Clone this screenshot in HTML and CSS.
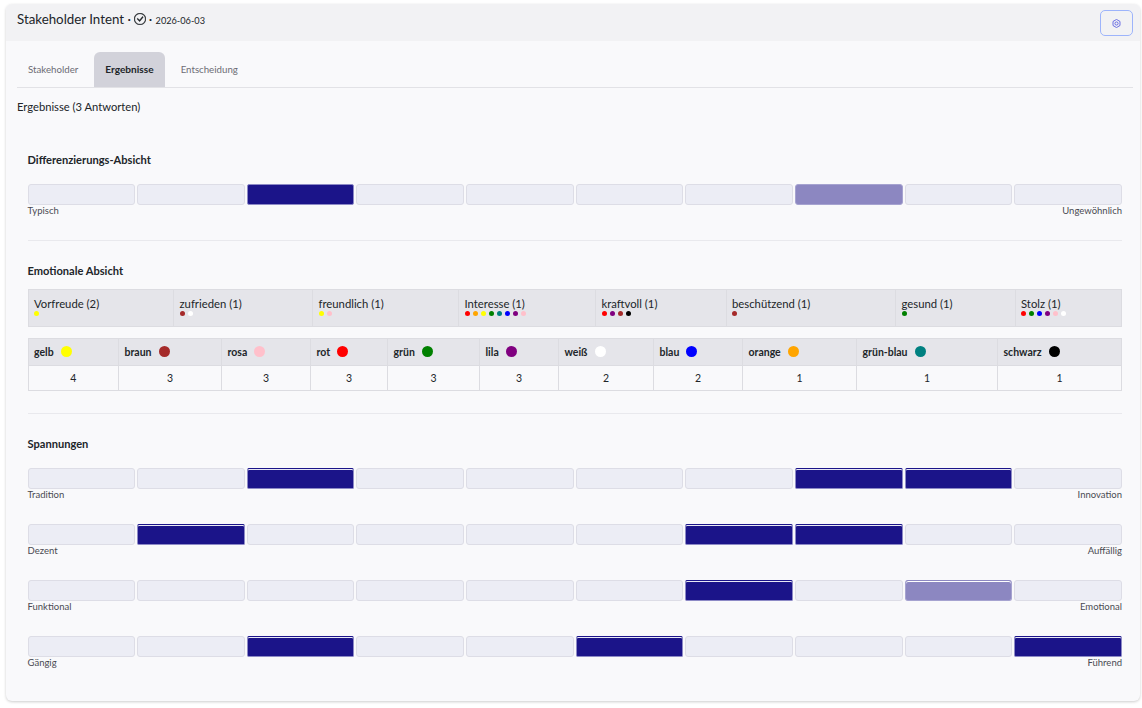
FILE: index.html
```html
<!DOCTYPE html>
<html lang="de">
<head>
    <meta charset="UTF-8">
    <meta name="viewport" content="width=device-width, initial-scale=1.0">
    <title>Stakeholder Intent</title>
    <link rel="stylesheet" href="styles.css">
</head>
<body>
    <div class="card">
        <div class="card-header">
            <div class="title">
                Stakeholder Intent ·
                <svg class="check-icon" viewBox="0 0 16 16" fill="currentColor" stroke="currentColor" stroke-width="0.5">
                    <path d="M8 15A7 7 0 1 1 8 1a7 7 0 0 1 0 14m0 1A8 8 0 1 0 8 0a8 8 0 0 0 0 16"/>
                    <path d="m10.97 4.97-.02.022-3.473 4.425-2.093-2.094a.75.75 0 0 0-1.06 1.06L6.97 11.03a.75.75 0 0 0 1.079-.02l3.992-4.99a.75.75 0 0 0-1.071-1.05"/>
                </svg>
                · <small>2026-06-03</small>
            </div>
            <button class="nut-button">
                <svg viewBox="0 0 16 16" fill="none" stroke="currentColor" stroke-width="1.6">
                    <path d="M8 .8 14.2 4.4V11.6L8 15.2 1.8 11.6V4.4Z"/>
                    <circle cx="8" cy="8" r="2.8"/>
                </svg>
            </button>
        </div>

        <div class="card-body">
            <div class="tabs">
                <a class="tab">Stakeholder</a>
                <a class="tab active">Ergebnisse</a>
                <a class="tab">Entscheidung</a>
            </div>

            <p class="result-count">Ergebnisse (3 Antworten)</p>

            <div class="section first">
                <h3>Differenzierungs-Absicht</h3>
                <div class="scale">
                    <div class="bars">
                        <div class="bar"></div><div class="bar"></div><div class="bar solid"></div><div class="bar"></div><div class="bar"></div>
                        <div class="bar"></div><div class="bar"></div><div class="bar half"></div><div class="bar"></div><div class="bar"></div>
                    </div>
                    <div class="scale-labels"><span>Typisch</span><span>Ungewöhnlich</span></div>
                </div>
            </div>

            <div class="section">
                <h3 class="tight">Emotionale Absicht</h3>
                <table class="emotions">
                    <tr>
                        <td>Vorfreude (2)<div class="dots"><i class="yellow"></i></div></td>
                        <td>zufrieden (1)<div class="dots"><i class="brown"></i><i class="white"></i></div></td>
                        <td>freundlich (1)<div class="dots"><i class="yellow"></i><i class="pink"></i></div></td>
                        <td>Interesse (1)<div class="dots"><i class="red"></i><i class="orange"></i><i class="yellow"></i><i class="green"></i><i class="teal"></i><i class="blue"></i><i class="purple"></i><i class="pink"></i></div></td>
                        <td>kraftvoll (1)<div class="dots"><i class="red"></i><i class="purple"></i><i class="brown"></i><i class="black"></i></div></td>
                        <td>beschützend (1)<div class="dots"><i class="brown"></i></div></td>
                        <td>gesund (1)<div class="dots"><i class="green"></i></div></td>
                        <td>Stolz (1)<div class="dots"><i class="red"></i><i class="green"></i><i class="blue"></i><i class="purple"></i><i class="pink"></i><i class="white"></i></div></td>
                    </tr>
                </table>

                <table class="colors">
                    <tr>
                        <th>gelb <i class="yellow"></i></th>
                        <th>braun <i class="brown"></i></th>
                        <th>rosa <i class="pink"></i></th>
                        <th>rot <i class="red"></i></th>
                        <th>grün <i class="green"></i></th>
                        <th>lila <i class="purple"></i></th>
                        <th>weiß <i class="white"></i></th>
                        <th>blau <i class="blue"></i></th>
                        <th>orange <i class="orange"></i></th>
                        <th>grün-blau <i class="teal"></i></th>
                        <th>schwarz <i class="black"></i></th>
                    </tr>
                    <tr>
                        <td>4</td><td>3</td><td>3</td><td>3</td><td>3</td><td>3</td><td>2</td><td>2</td><td>1</td><td>1</td><td>1</td>
                    </tr>
                </table>
            </div>

            <div class="section">
                <h3>Spannungen</h3>
                <div class="scale tension">
                    <div class="bars">
                        <div class="bar"></div><div class="bar"></div><div class="bar solid"></div><div class="bar"></div><div class="bar"></div>
                        <div class="bar"></div><div class="bar"></div><div class="bar solid"></div><div class="bar solid"></div><div class="bar"></div>
                    </div>
                    <div class="scale-labels"><span>Tradition</span><span>Innovation</span></div>
                </div>
                <div class="scale tension">
                    <div class="bars">
                        <div class="bar"></div><div class="bar solid"></div><div class="bar"></div><div class="bar"></div><div class="bar"></div>
                        <div class="bar"></div><div class="bar solid"></div><div class="bar solid"></div><div class="bar"></div><div class="bar"></div>
                    </div>
                    <div class="scale-labels"><span>Dezent</span><span>Auffällig</span></div>
                </div>
                <div class="scale tension">
                    <div class="bars">
                        <div class="bar"></div><div class="bar"></div><div class="bar"></div><div class="bar"></div><div class="bar"></div>
                        <div class="bar"></div><div class="bar solid"></div><div class="bar"></div><div class="bar half"></div><div class="bar"></div>
                    </div>
                    <div class="scale-labels"><span>Funktional</span><span>Emotional</span></div>
                </div>
                <div class="scale tension">
                    <div class="bars">
                        <div class="bar"></div><div class="bar"></div><div class="bar solid"></div><div class="bar"></div><div class="bar"></div>
                        <div class="bar solid"></div><div class="bar"></div><div class="bar"></div><div class="bar"></div><div class="bar solid"></div>
                    </div>
                    <div class="scale-labels"><span>Gängig</span><span>Führend</span></div>
                </div>
            </div>
        </div>
    </div>
</body>
</html>
```

FILE: styles.css
```css
* {
    box-sizing: border-box;
}

body {
    margin: 0;
    padding: 4px 2px 7px 6px;
    background-color: #ffffff;
    color: #212529;
    font-family: "Lato", "Open Sans", sans-serif;
    font-size: 11px;
}

.card {
    height: 697px;
    background-color: #f9f9fb;
    border-radius: 6px;
    box-shadow: 0 1px 3px rgba(0, 0, 0, 0.2);
    overflow: hidden;
}

.card-header {
    display: flex;
    justify-content: space-between;
    height: 37px;
    padding: 6px 7px 0 11px;
    background-color: #f2f2f4;
}

.title {
    padding-top: 1px;
    font-size: 13.3px;
    line-height: 17px;
}

.title small {
    font-size: 9.2px;
}

.check-icon {
    width: 12px;
    height: 12px;
    margin-right: -1px;
    vertical-align: -1px;
}

.nut-button {
    width: 33px;
    height: 26px;
    padding: 0;
    background: none;
    border: 1px solid #9db4fb;
    border-radius: 5px;
    color: #5b60e0;
}

.nut-button svg {
    display: block;
    width: 9px;
    height: 9px;
    margin: auto;
}

.card-body {
    padding: 11px 7px 0 11px;
}

.tabs {
    display: flex;
    gap: 5px;
    height: 36px;
    border-bottom: 1px solid #e2e2e6;
}

.tab {
    height: 35px;
    padding: 0 11px;
    color: #6c6c74;
    font-size: 9.7px;
    line-height: 35px;
    border-radius: 6px 6px 0 0;
}

.tab.active {
    background-color: #d2d2da;
    color: #212529;
    font-size: 10.1px;
    font-weight: 700;
}

.result-count {
    margin: 12px 0 0;
    font-size: 11.2px;
    line-height: 14px;
}

.section {
    margin: 0 11px 0 10.5px;
    padding-top: 23px;
    padding-bottom: 22px;
    border-bottom: 1px solid #e9e9ed;
}

.section:last-child {
    border-bottom: none;
}

.section.first {
    padding-top: 39px;
}

h3 {
    margin: 0 0 17px;
    font-size: 11.1px;
    line-height: 14px;
    font-weight: 700;
}

h3.tight {
    margin-bottom: 11px;
}

.bars {
    display: flex;
    gap: 2px;
}

.bar {
    flex: 1;
    height: 21px;
    background-color: #ecedf5;
    border: 1px solid #dddde6;
    border-radius: 3px;
}

.bar.solid {
    background-color: #1b1489;
    border-color: #8d8ac6;
    border-radius: 2px;
}

.bar.half {
    background-color: #8c87c1;
    border-color: #a6a3d0;
}

.tension .bar.solid {
    border-top-color: #1b1489;
    box-shadow: inset 0 1px 0 #e8e8f5;
}

.tension .bar.half {
    border-top-color: #8c87c1;
    box-shadow: inset 0 1px 0 #ffffff;
}

.tension {
    margin-bottom: 22px;
}

.tension:last-child {
    margin-bottom: 0;
}

.scale-labels {
    display: flex;
    justify-content: space-between;
    padding-bottom: 1px;
    color: #4a4a52;
    font-size: 9.5px;
    line-height: 12px;
}

table {
    width: 100%;
    border-collapse: collapse;
    table-layout: fixed;
}

.emotions {
    height: 38px;
    margin-bottom: 11px;
    background-color: #e5e5ea;
    border: 1px solid #dcdce1;
}

.emotions td {
    padding: 6px 5.5px 0;
    vertical-align: top;
    font-size: 11.3px;
    line-height: 15px;
    border-left: 1px solid #dcdce1;
}

.emotions td:nth-child(1) { width: 145.5px; }
.emotions td:nth-child(2) { width: 139px; }
.emotions td:nth-child(3) { width: 146px; }
.emotions td:nth-child(4) { width: 137px; }
.emotions td:nth-child(5) { width: 130.5px; }
.emotions td:nth-child(6) { width: 169.5px; }
.emotions td:nth-child(7) { width: 119.5px; }

.dots {
    display: flex;
    gap: 3px;
}

.dots i {
    width: 5px;
    height: 5px;
    border-radius: 50%;
}

.colors {
    border: 1px solid #dcdce1;
}

.colors th,
.colors td {
    border: 1px solid #dcdce1;
    font-size: 10.5px;
}

.colors th {
    height: 27px;
    padding: 0 5.5px;
    background-color: #e5e5ea;
    font-weight: 700;
    text-align: left;
    white-space: nowrap;
}

.colors th i {
    display: inline-block;
    width: 11px;
    height: 11px;
    margin-left: 4.5px;
    vertical-align: -1px;
    border-radius: 50%;
}

.colors td {
    height: 25px;
    text-align: center;
}

.colors th:nth-child(1) { width: 90.5px; }
.colors th:nth-child(2) { width: 103px; }
.colors th:nth-child(3) { width: 89px; }
.colors th:nth-child(4) { width: 77px; }
.colors th:nth-child(5) { width: 92px; }
.colors th:nth-child(6) { width: 79px; }
.colors th:nth-child(7) { width: 95px; }
.colors th:nth-child(8) { width: 89px; }
.colors th:nth-child(9) { width: 114px; }
.colors th:nth-child(10) { width: 141px; }

.yellow { background-color: yellow; }
.brown { background-color: brown; }
.pink { background-color: pink; }
.red { background-color: red; }
.green { background-color: green; }
.purple { background-color: purple; }
.white { background-color: white; }
.blue { background-color: blue; }
.orange { background-color: orange; }
.teal { background-color: teal; }
.black { background-color: black; }
```
